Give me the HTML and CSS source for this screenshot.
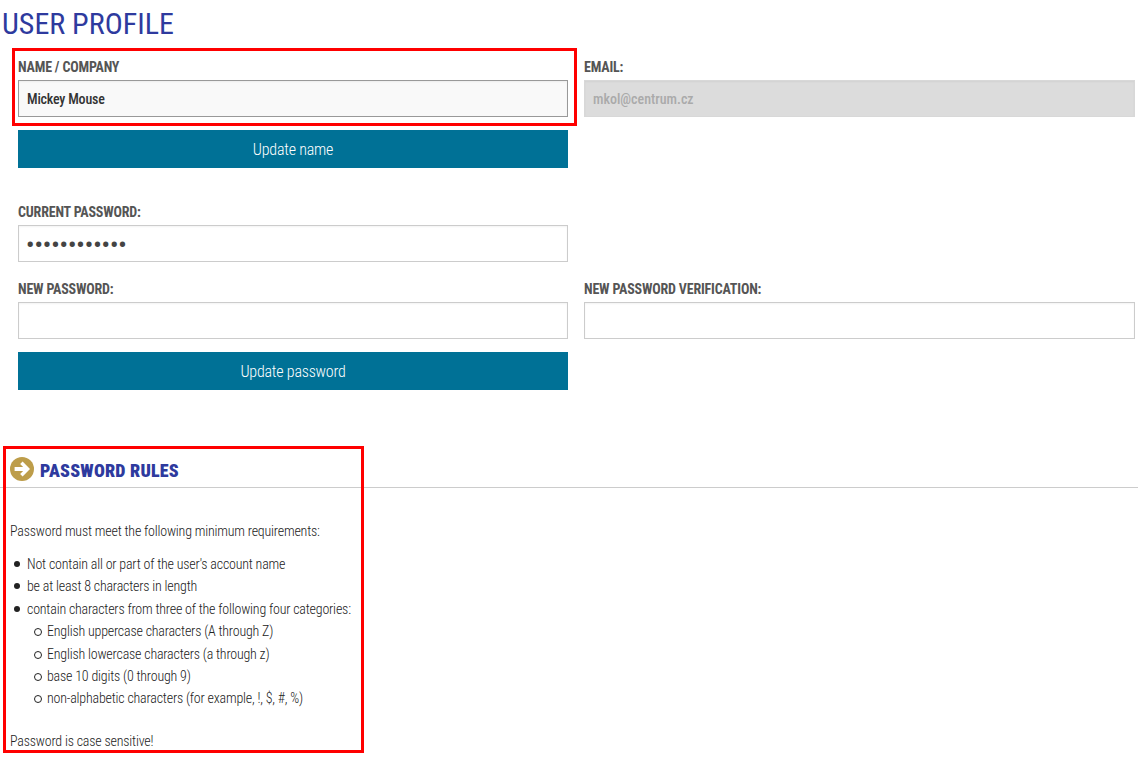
FILE: index.html
```html
<!DOCTYPE html>
<html lang="en">
<head>
<meta charset="utf-8">
<title>User profile</title>
<link rel="stylesheet" href="styles.css">
</head>
<body>
<h1 class="page-title">USER PROFILE</h1>
<div class="form-area">
  <div class="mark mark-name"></div>
  <form class="form-grid">
    <div class="field">
      <label class="label">NAME / COMPANY</label>
      <input class="input input-name" type="text" value="Mickey Mouse">
    </div>
    <div class="field">
      <label class="label">EMAIL:</label>
      <input class="input input-disabled" type="text" value="mkol@centrum.cz" disabled>
    </div>
    <div class="btn-cell btn-cell-name"><button class="btn" type="button">Update name</button></div>
    <div class="field field-current">
      <label class="label">CURRENT PASSWORD:</label>
      <input class="input input-pass" type="password" value="************">
    </div>
    <div class="field field-new">
      <label class="label">NEW PASSWORD:</label>
      <input class="input" type="password">
    </div>
    <div class="field field-verify">
      <label class="label">NEW PASSWORD VERIFICATION:</label>
      <input class="input" type="password">
    </div>
    <div class="btn-cell btn-cell-pass"><button class="btn" type="button">Update password</button></div>
  </form>
</div>
<section class="rules">
  <div class="mark mark-rules"></div>
  <h2 class="rules-title">
    <svg class="arrow-icon" width="24" height="24" viewBox="0 0 24 24" aria-hidden="true">
      <circle cx="12" cy="12" r="12" fill="#bd9d4a"/>
      <path d="M12.600 4.600 20 12l-7.400 7.400-2.500-2.500 3-3H4.600v-3.800h8.500l-3-3z" fill="#fff"/>
    </svg>
    <span class="rules-title-text">PASSWORD RULES</span>
  </h2>
  <p class="rules-intro">Password must meet the following minimum requirements:</p>
  <ul class="list">
    <li class="item">Not contain all or part of the user's account name</li>
    <li class="item">be at least 8 characters in length</li>
    <li class="item">contain characters from three of the following four categories:
      <ul class="sublist">
        <li class="subitem">English uppercase characters (A through Z)</li>
        <li class="subitem">English lowercase characters (a through z)</li>
        <li class="subitem">base 10 digits (0 through 9)</li>
        <li class="subitem">non-alphabetic characters (for example, !, $, #, %)</li>
      </ul>
    </li>
  </ul>
  <p class="rules-end">Password is case sensitive!</p>
</section>
</body>
</html>
```
FILE: styles.css
```css
* { box-sizing: border-box; }
html, body { margin: 0; padding: 0; }
body {
  width: 1138px;
  height: 765px;
  overflow: hidden;
  background: #fff;
  color: #333;
  font-family: Roboto, "Liberation Sans", sans-serif;
  font-stretch: 75%;
}
.page-title {
  margin: 0;
  padding: 7px 0 0 2px;
  height: 48px;
  font-size: 30px;
  line-height: 34px;
  font-weight: 400;
  color: #2e3a9e;
}
.form-area { position: relative; }
.mark { position: absolute; border: 3px solid #f00; pointer-events: none; }
.mark-name { left: 12px; top: 0; width: 565px; height: 78px; }
.form-grid {
  display: grid;
  grid-template-columns: 550px 551px;
  column-gap: 16px;
  padding: 11px 0 0 18px;
}
.field { display: flex; flex-direction: column; }
.label {
  height: 21px;
  font-size: 14px;
  line-height: 17px;
  font-weight: 700;
  letter-spacing: -0.18px;
  color: #555;
}
.input {
  display: block;
  width: 100%;
  height: 37px;
  padding: 0 8px;
  border: 1px solid #ccc;
  box-shadow: inset 0 1px 2px rgba(0, 0, 0, 0.05);
  background: #fff;
  font-family: inherit;
  font-stretch: inherit;
  font-size: 14px;
  font-weight: 500;
  letter-spacing: -0.2px;
  color: #333;
  outline: none;
}
.input-name { background: #f9f9f9; border-color: #999; }
.input-disabled { background: #dcdcdc; border-color: #d8d8d8; color: #aaa; letter-spacing: 0; }
.input-pass { padding: 3px 8px 0 7px; font-size: 24px; letter-spacing: 0; color: #444; }
.btn-cell { grid-column: 1; }
.btn-cell-name { padding-top: 13px; grid-row: 2; }
.btn-cell-pass { padding-top: 13px; }
.field-current { grid-column: 1; padding-top: 36px; }
.field-new { grid-column: 1; padding-top: 19px; }
.field-verify { grid-column: 2; padding-top: 19px; }
.btn {
  display: block;
  width: 100%;
  height: 38px;
  border: 0;
  padding: 0;
  background: #007196;
  color: #fff;
  font-family: inherit;
  font-stretch: inherit;
  font-size: 16px;
  font-weight: 300;
  letter-spacing: -0.2px;
}
.rules { position: relative; margin-top: 56px; }
.mark-rules { left: 3px; top: 0; width: 361px; height: 307px; }
.rules-title {
  display: flex;
  align-items: flex-start;
  gap: 6px;
  margin: 0;
  padding: 11px 0 0 10px;
  height: 42px;
  border-bottom: 1px solid #ccc;
  font-size: 18px;
  font-weight: 900;
  letter-spacing: 0.2px;
  color: #2e3a9e;
}
.rules-title-text { line-height: 28px; }
.arrow-icon { flex: none; }
.rules-intro, .rules-end {
  margin: 0;
  padding-left: 10px;
  font-size: 14px;
  font-weight: 300;
  letter-spacing: -0.2px;
  line-height: 22px;
  color: #222;
}
.rules-intro { padding-top: 32px; }
.list {
  margin: 11px 0 0;
  padding: 0 0 0 27px;
  list-style: none;
  font-size: 14px;
  font-weight: 300;
  letter-spacing: -0.2px;
  line-height: 22.4px;
  color: #222;
}
.item, .subitem { position: relative; }
.item::before {
  content: "";
  position: absolute;
  left: -13px;
  top: 8px;
  width: 6px;
  height: 6px;
  border-radius: 50%;
  background: #222;
}
.sublist { margin: 0; padding-left: 20px; list-style: none; }
.subitem::before {
  content: "";
  position: absolute;
  left: -13px;
  top: 8px;
  width: 6px;
  height: 6px;
  border-radius: 50%;
  border: 1px solid #222;
}
.rules-end { padding-top: 20px; }
```
